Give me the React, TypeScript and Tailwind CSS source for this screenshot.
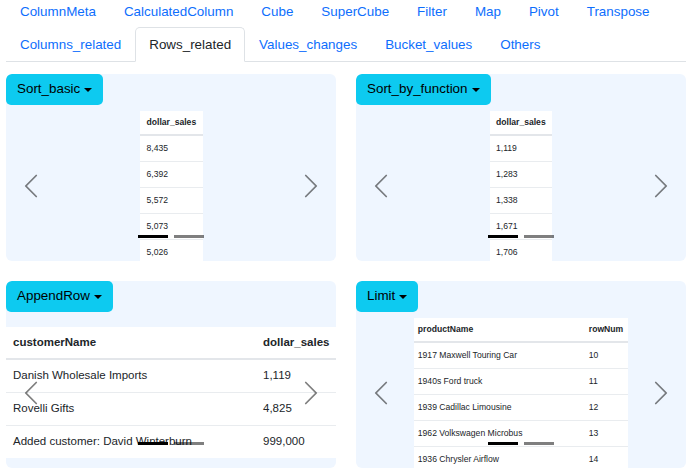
import React from "react";

const topLinks = ["ColumnMeta", "CalculatedColumn", "Cube", "SuperCube", "Filter", "Map", "Pivot", "Transpose"];
const tabs = ["Columns_related", "Rows_related", "Values_changes", "Bucket_values", "Others"];

const prevPath =
  "M11.354 1.646a.5.5 0 0 1 0 .708L5.707 8l5.647 5.646a.5.5 0 0 1-.708.708l-6-6a.5.5 0 0 1 0-.708l6-6a.5.5 0 0 1 .708 0z";
const nextPath =
  "M4.646 1.646a.5.5 0 0 1 .708 0l6 6a.5.5 0 0 1 0 .708l-6 6a.5.5 0 0 1-.708-.708L10.293 8 4.646 2.354a.5.5 0 0 1 0-.708z";

function Chevron({ d }: { d: string }) {
  return (
    <svg viewBox="0 0 16 16" className="h-[28px] w-[28px]" fill="#000">
      <path d={d} />
    </svg>
  );
}

function Carousel({ children }: { children: React.ReactNode }) {
  return (
    <div className="relative mt-[6px] h-[150px] overflow-hidden">
      <div className="flex h-full justify-center">{children}</div>
      <div className="absolute inset-y-0 left-0 flex w-[15%] items-center justify-center opacity-50">
        <Chevron d={prevPath} />
      </div>
      <div className="absolute inset-y-0 right-0 flex w-[15%] items-center justify-center opacity-50">
        <Chevron d={nextPath} />
      </div>
      <div className="absolute inset-x-0 bottom-[23px] flex justify-center">
        <span className="mx-[3px] h-[3px] w-[30px] bg-black" />
        <span className="mx-[3px] h-[3px] w-[30px] bg-black opacity-50" />
      </div>
    </div>
  );
}

function Card({ title, children }: { title: string; children: React.ReactNode }) {
  return (
    <div className="h-[187px] overflow-hidden rounded-[6px] bg-[#eff6ff]">
      <button className="flex h-[31px] items-center rounded-[5px] bg-[#0dcaf0] px-[11px] text-[13.4px] text-black">
        {title}
        <span className="ml-[4px] mt-[1px] border-x-[4px] border-t-[4px] border-x-transparent border-t-black" />
      </button>
      <Carousel>{children}</Carousel>
    </div>
  );
}

function SmallTable({ head, rows, widths, pl }: { head: string[]; rows: string[][]; widths: string[]; pl: string }) {
  return (
    <table className="h-fit border-collapse bg-white text-[8.6px] text-[#212529]">
      <thead>
        <tr className="h-[24px] border-b-2 border-[#e3e6ea]">
          {head.map((h, i) => (
            <th key={h} className={`${widths[i]} ${pl} pr-[5px] text-left font-bold`}>
              {h}
            </th>
          ))}
        </tr>
      </thead>
      <tbody>
        {rows.map((r, j) => (
          <tr key={j} className="h-[26px] border-b border-[#e9ecef]">
            {r.map((c, i) => (
              <td key={i} className={`${pl} pr-[5px]`}>
                {c}
              </td>
            ))}
          </tr>
        ))}
      </tbody>
    </table>
  );
}

export default function App() {
  return (
    <div className="h-[471px] w-[692px] overflow-hidden bg-white font-['Liberation_Sans',Arial,sans-serif] text-[#212529]">
      <nav className="flex h-[27px] pl-[6px]">
        {topLinks.map((l) => (
          <a key={l} className="px-[14px] text-[13.4px] leading-[24px] text-[#0d6efd]">
            {l}
          </a>
        ))}
      </nav>
      <div className="mx-[6px] flex border-b border-[#dee2e6]">
        {tabs.map((t) =>
          t === "Rows_related" ? (
            <a
              key={t}
              className="-mb-px h-[35px] rounded-t-[5px] border border-[#dee2e6] border-b-white bg-white px-[13px] text-[13.4px] leading-[33px] text-[#212529]"
            >
              {t}
            </a>
          ) : (
            <a key={t} className="-mb-px h-[35px] border border-transparent px-[13px] text-[13.4px] leading-[33px] text-[#0d6efd]">
              {t}
            </a>
          )
        )}
      </div>
      <div className="mt-[12px] grid grid-cols-2 gap-[20px] px-[6px]">
        <Card title="Sort_basic">
          <SmallTable
            head={["dollar_sales"]}
            rows={[["8,435"], ["6,392"], ["5,572"], ["5,073"], ["5,026"]]}
            widths={["w-[63px]"]}
            pl="pl-[7px]"
          />
        </Card>
        <Card title="Sort_by_function">
          <SmallTable
            head={["dollar_sales"]}
            rows={[["1,119"], ["1,283"], ["1,338"], ["1,671"], ["1,706"]]}
            widths={["w-[62px]"]}
            pl="pl-[6px]"
          />
        </Card>
        <Card title="AppendRow">
          <div className="w-full pt-[9px]">
            <table className="w-full border-collapse bg-white text-[11.5px] text-[#212529]">
              <thead>
                <tr className="h-[32px] border-b-2 border-[#e3e6ea]">
                  <th className="w-[250px] pl-[7px] text-left font-bold">customerName</th>
                  <th className="pl-[7px] text-left font-bold">dollar_sales</th>
                </tr>
              </thead>
              <tbody>
                {[
                  ["Danish Wholesale Imports", "1,119"],
                  ["Rovelli Gifts", "4,825"],
                  ["Added customer: David Winterburn", "999,000"],
                ].map((r, j) => (
                  <tr key={j} className={`h-[33px] ${j < 2 ? "border-b border-[#e9ecef]" : ""}`}>
                    <td className="pl-[7px]">{r[0]}</td>
                    <td className="pl-[7px]">{r[1]}</td>
                  </tr>
                ))}
              </tbody>
            </table>
          </div>
        </Card>
        <Card title="Limit">
          <SmallTable
            head={["productName", "rowNum"]}
            rows={[
              ["1917 Maxwell Touring Car", "10"],
              ["1940s Ford truck", "11"],
              ["1939 Cadillac Limousine", "12"],
              ["1962 Volkswagen Microbus", "13"],
              ["1936 Chrysler Airflow", "14"],
            ]}
            widths={["w-[171px]", "w-[40px]"]}
            pl="pl-[4px]"
          />
        </Card>
      </div>
    </div>
  );
}
